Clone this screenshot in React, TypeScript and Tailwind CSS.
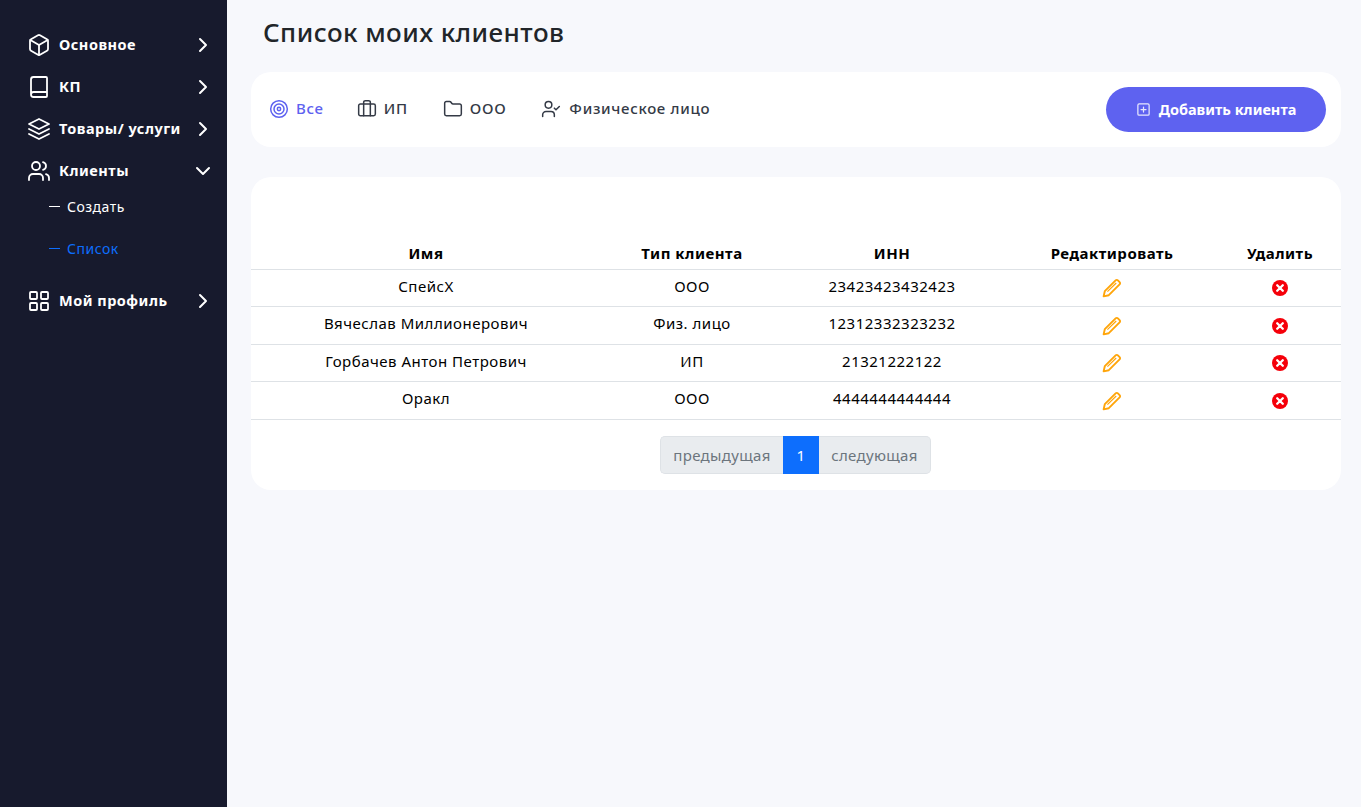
import React from 'react';
import {
  Box,
  Book,
  Users,
  ChevronRight,
  ChevronDown,
  LayoutGrid,
  Target,
  Briefcase,
  Folder,
  UserCheck,
  SquarePlus,
} from 'lucide-react';

const font = 'font-["Noto_Sans",sans-serif]';

type NavItem = {
  label: string;
  icon: React.ElementType;
  open?: boolean;
};

const LayersIcon = ({ size = 24, strokeWidth = 1.8 }: { size?: number; strokeWidth?: number }) => (
  <svg
    width={size}
    height={size}
    viewBox="0 0 24 24"
    fill="none"
    stroke="currentColor"
    strokeWidth={strokeWidth}
    strokeLinejoin="round"
    strokeLinecap="round"
  >
    <path d="M12 2l10 5-10 5L2 7z" />
    <path d="M2 12l10 5 10-5" />
    <path d="M2 17l10 5 10-5" />
  </svg>
);

const NavRow = ({ label, icon: Icon, open }: NavItem) => (
  <div className="flex h-[42px] items-center pl-[27px] pr-[12px] text-white">
    <Icon size={24} strokeWidth={1.8} className="shrink-0" />
    <span className="ml-[8px] flex-1 text-[14.5px] font-bold tracking-[0.5px] whitespace-nowrap">{label}</span>
    {open ? (
      <ChevronDown size={24} strokeWidth={2} className="shrink-0" />
    ) : (
      <ChevronRight size={24} strokeWidth={2} className="shrink-0" />
    )}
  </div>
);

const Sidebar = () => (
  <aside className="w-[227px] shrink-0 bg-[#171a2d] pt-[24px]">
    <NavRow label="Основное" icon={Box} />
    <NavRow label="КП" icon={Book} />
    <NavRow label="Товары/ услуги" icon={LayersIcon} />
    <NavRow label="Клиенты" icon={Users} open />
    <div className="-mt-[6px] flex h-[40px] items-center pl-[49px] text-[14px] tracking-[0.5px] text-white">
      <span className="mr-[7px] mt-[1px] h-px w-[11px] bg-white" />
      Создать
    </div>
    <div className="mt-[2px] flex h-[40px] items-center pl-[49px] text-[14px] tracking-[0.5px] text-[#0d6efd]">
      <span className="mr-[7px] mt-[1px] h-px w-[11px] bg-[#0d6efd]" />
      Список
    </div>
    <div className="mt-[12px]">
      <NavRow label="Мой профиль" icon={LayoutGrid} />
    </div>
  </aside>
);

const Tab = ({
  label,
  icon: Icon,
  active,
  gap,
  className = '',
}: {
  label: string;
  icon: React.ElementType;
  active?: boolean;
  gap: string;
  className?: string;
}) => (
  <div
    className={`flex items-center text-[15px] font-medium tracking-[0.7px] ${gap} ${
      active ? 'text-[#5e62f0]' : 'text-[#343a46]'
    } ${className}`}
  >
    <Icon size={20} strokeWidth={1.8} />
    {label}
  </div>
);

const clients = [
  { name: 'СпейсХ', type: 'ООО', inn: '23423423432423' },
  { name: 'Вячеслав Миллионерович', type: 'Физ. лицо', inn: '12312332323232' },
  { name: 'Горбачев Антон Петрович', type: 'ИП', inn: '21321222122' },
  { name: 'Оракл', type: 'ООО', inn: '4444444444444' },
];

const EditIcon = () => (
  <svg width="20" height="20" viewBox="0 0 20 20" fill="none" stroke="#ffa50a" strokeWidth="1.9" className="mx-auto block">
    <path d="M1.6 18.4l1.2-5.2L13.6 2.4a1.6 1.6 0 0 1 2.3 0l1.7 1.7a1.6 1.6 0 0 1 0 2.3L6.8 17.2z" strokeLinejoin="round" />
    <path d="M5.4 13.6l8.8-8.6" strokeWidth="1.2" />
  </svg>
);

const DeleteIcon = () => (
  <svg width="16" height="16" viewBox="0 0 16 16" className="mx-auto block">
    <circle cx="8" cy="8" r="8" fill="#f5000a" />
    <path d="M5.2 5.2l5.6 5.6M10.8 5.2l-5.6 5.6" stroke="#fff" strokeWidth="2.3" strokeLinecap="round" />
  </svg>
);

const ClientsTable = () => (
  <table className="w-full table-fixed border-collapse text-black">
    <colgroup>
      <col className="w-[350px]" />
      <col className="w-[182px]" />
      <col className="w-[218px]" />
      <col className="w-[222px]" />
      <col />
    </colgroup>
    <thead>
      <tr className="h-[37px] border-b border-[#dee2e6] text-[15px] tracking-[0.5px]">
        <th className="pt-[5px] font-bold">Имя</th>
        <th className="pt-[5px] font-bold">Тип клиента</th>
        <th className="pt-[5px] font-bold">ИНН</th>
        <th className="pt-[5px] font-bold">Редактировать</th>
        <th className="pr-[4px] pt-[5px] font-bold">Удалить</th>
      </tr>
    </thead>
    <tbody className="text-[15px] tracking-[0.5px]">
      {clients.map((c) => (
        <tr key={c.name} className="h-[37.5px] border-b border-[#dee2e6] text-center">
          <td className="pb-[4px]">{c.name}</td>
          <td className="pb-[4px]">{c.type}</td>
          <td className="pb-[4px]">{c.inn}</td>
          <td className="pt-[1px]">
            <EditIcon />
          </td>
          <td className="pr-[4px] pt-[1px]">
            <DeleteIcon />
          </td>
        </tr>
      ))}
    </tbody>
  </table>
);

const Pagination = () => (
  <div className="mt-[16px] -ml-px flex justify-center text-[15px] tracking-[0.35px]">
    <div className="flex h-[38px] w-[123px] items-center justify-center rounded-l-[5px] border border-r-0 border-[#dee2e6] bg-[#e9ecef] pt-[2px] text-[#6c757d]">
      предыдущая
    </div>
    <div className="flex h-[38px] w-[36px] items-center justify-center bg-[#0d6efd] pt-[2px] text-white">1</div>
    <div className="flex h-[38px] w-[112px] items-center justify-center rounded-r-[5px] border border-l-0 border-[#dee2e6] bg-[#e9ecef] pt-[2px] text-[#6c757d]">
      следующая
    </div>
  </div>
);

export default function App() {
  return (
    <div className={`flex min-h-[807px] bg-[#f7f8fc] ${font}`}>
      <Sidebar />
      <main className="flex-1 pl-[24px] pr-[20px]">
        <h1 className="pl-[12px] pt-[15px] text-[26px] leading-[34px] font-medium tracking-[0.45px] text-[#212529]">
          Список моих клиентов
        </h1>
        <section className="mt-[23px] flex h-[75px] items-center justify-between rounded-[20px] bg-white pl-[18px] pr-[15px]">
          <div className="-mt-[2px] flex items-center">
            <Tab label="Все" icon={Target} active gap="gap-[7px]" className="mr-[33px]" />
            <Tab label="ИП" icon={Briefcase} gap="gap-[7px]" className="mr-[35px]" />
            <Tab label="ООО" icon={Folder} gap="gap-[7px]" className="mr-[35px]" />
            <Tab label="Физическое лицо" icon={UserCheck} gap="gap-[8px]" />
          </div>
          <button className="flex h-[45px] w-[220px] items-center justify-center gap-[8px] rounded-full bg-[#5e62f0] text-[14.5px] font-bold text-white">
            <SquarePlus size={15} strokeWidth={2} className="opacity-85" />
            Добавить клиента
          </button>
        </section>
        <section className="mt-[30px] rounded-[20px] bg-white pb-[16px] pt-[55px]">
          <ClientsTable />
          <Pagination />
        </section>
      </main>
    </div>
  );
}
